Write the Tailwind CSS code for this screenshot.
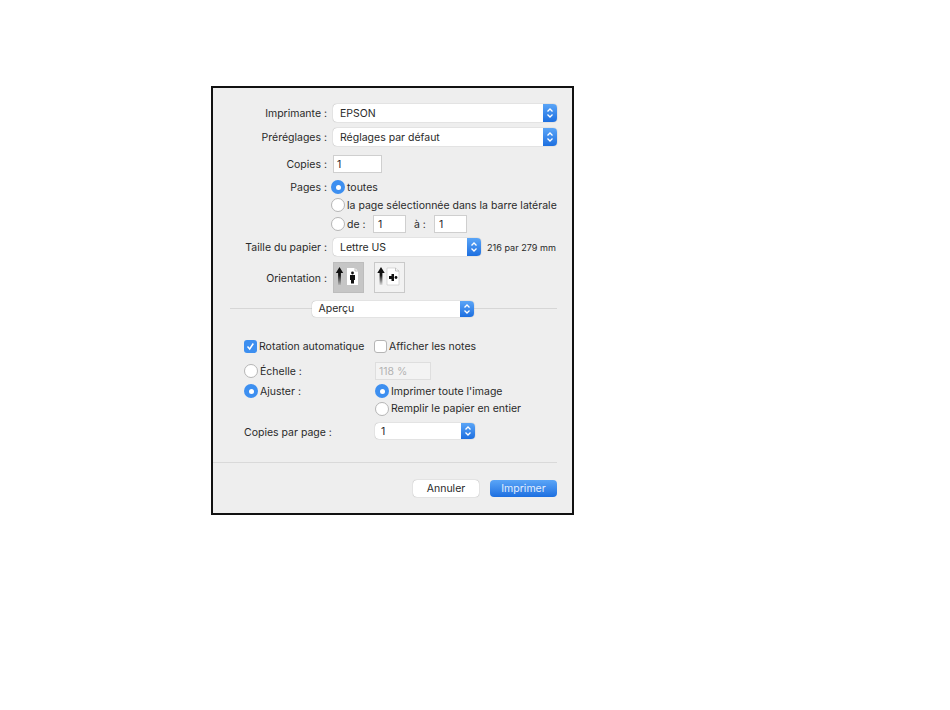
<!DOCTYPE html>
<html lang="fr">
<head>
  <meta charset="UTF-8" />
  <title>Imprimer</title>
  <script src="https://cdn.jsdelivr.net/npm/@tailwindcss/browser@4"></script>
</head>
<body class="bg-white font-['Inter','Liberation_Sans',sans-serif] text-[10.5px] leading-[17px] text-[#2a2a2a]">
  <div class="pt-[86px] pl-[211px]">
    <!-- dialog -->
    <div class="relative w-[363px] h-[429px] border-2 border-[#111] bg-[#eeeeee] pt-[16px] pr-[15px] flex flex-col">

      <div class="flex items-center h-[18px]">
        <span class="w-[114px] text-right">Imprimante :</span>
        <div class="ml-[6px] flex-1 h-[18px] bg-white rounded-[4px] shadow-[0_0_1px_#888] flex items-center justify-between pl-[7px]">
          <span>EPSON</span>
          <span class="w-[14px] h-[18px] rounded-r-[4px] bg-gradient-to-b from-[#5aa5f7] to-[#1c6fe0] flex items-center justify-center">
            <svg width="8" height="12" viewBox="0 0 8 12" fill="none" stroke="#fff" stroke-width="1.3"><path d="M1.5 4.5 4 2l2.5 2.5M1.5 7.5 4 10l2.5-2.5"/></svg>
          </span>
        </div>
      </div>

      <div class="flex items-center h-[18px] mt-[6px]">
        <span class="w-[114px] text-right">Préréglages :</span>
        <div class="ml-[6px] flex-1 h-[18px] bg-white rounded-[4px] shadow-[0_0_1px_#888] flex items-center justify-between pl-[7px]">
          <span>Réglages par défaut</span>
          <span class="w-[14px] h-[18px] rounded-r-[4px] bg-gradient-to-b from-[#5aa5f7] to-[#1c6fe0] flex items-center justify-center">
            <svg width="8" height="12" viewBox="0 0 8 12" fill="none" stroke="#fff" stroke-width="1.3"><path d="M1.5 4.5 4 2l2.5 2.5M1.5 7.5 4 10l2.5-2.5"/></svg>
          </span>
        </div>
      </div>

      <div class="flex items-center h-[18px] mt-[9px]">
        <span class="w-[114px] text-right">Copies :</span>
        <div class="ml-[6px] w-[49px] h-[18px] bg-white border border-[#cfcfcf] pl-[3px] flex items-center">1</div>
      </div>

      <div class="flex items-center h-[18px] mt-[5px]">
        <span class="w-[114px] text-right">Pages :</span>
        <span class="ml-[4px] shrink-0 w-[14px] h-[14px] rounded-full bg-[#3d8ff0] flex items-center justify-center"><span class="w-[5px] h-[5px] rounded-full bg-white"></span></span>
        <span class="ml-[2px]">toutes</span>
      </div>

      <div class="flex items-center h-[18px]">
        <span class="ml-[118px] shrink-0 w-[14px] h-[14px] rounded-full bg-white border border-[#b5b5b5]"></span>
        <span class="ml-[2px] whitespace-nowrap">la page sélectionnée dans la barre latérale</span>
      </div>

      <div class="flex items-center h-[18px] mt-[1px]">
        <span class="ml-[118px] shrink-0 w-[14px] h-[14px] rounded-full bg-white border border-[#b5b5b5]"></span>
        <span class="ml-[2px] w-[26px]">de :</span>
        <div class="w-[33px] h-[18px] bg-white border border-[#cfcfcf] pl-[4px] flex items-center">1</div>
        <span class="ml-[8px] w-[20px]">à :</span>
        <div class="w-[33px] h-[18px] bg-white border border-[#cfcfcf] pl-[4px] flex items-center">1</div>
      </div>

      <div class="flex items-center h-[18px] mt-[5px]">
        <span class="w-[114px] text-right">Taille du papier :</span>
        <div class="ml-[6px] w-[148px] h-[18px] bg-white rounded-[4px] shadow-[0_0_1px_#888] flex items-center justify-between pl-[7px]">
          <span>Lettre US</span>
          <span class="w-[14px] h-[18px] rounded-r-[4px] bg-gradient-to-b from-[#5aa5f7] to-[#1c6fe0] flex items-center justify-center">
            <svg width="8" height="12" viewBox="0 0 8 12" fill="none" stroke="#fff" stroke-width="1.3"><path d="M1.5 4.5 4 2l2.5 2.5M1.5 7.5 4 10l2.5-2.5"/></svg>
          </span>
        </div>
        <span class="ml-[6px] text-[9.1px] whitespace-nowrap">216 par 279 mm</span>
      </div>

      <div class="flex items-center h-[31px] mt-[6px]">
        <span class="w-[114px] text-right pt-[2px]">Orientation :</span>
        <div class="ml-[6px] w-[31px] h-[31px] bg-[#c6c6c6] border border-[#bdbdbd]">
          <svg width="29" height="29" viewBox="0 0 29 29">
            <defs><linearGradient id="fadeA" x1="0" y1="0" x2="0" y2="1"><stop offset="0.45" stop-color="#111"/><stop offset="1" stop-color="#111" stop-opacity="0.1"/></linearGradient></defs>
            <path d="M1.800 10 5.500 4 9.200 10H6.900V22H4.100V10z" fill="url(#fadeA)"/>
            <path d="M13 5h8l3 3v14H13z" fill="#fff"/>
            <path d="M21 5v3h3" fill="none" stroke="#aaa" stroke-width=".7"/>
            <circle cx="18.500" cy="10" r="1.400" fill="#111"/>
            <path d="M16 12h5v5h-1v3.500h-3V17h-1z" fill="#111"/>
          </svg>
        </div>
        <div class="ml-[10px] w-[31px] h-[31px] bg-[#f2f2f2] border border-[#c9c9c9]">
          <svg width="29" height="29" viewBox="0 0 29 29">
            <defs><linearGradient id="fadeB" x1="0" y1="0" x2="0" y2="1"><stop offset="0.45" stop-color="#111"/><stop offset="1" stop-color="#111" stop-opacity="0.1"/></linearGradient></defs>
            <path d="M2.300 10 6 4 9.700 10H7.400V22H4.600V10z" fill="url(#fadeB)"/>
            <path d="M12 5h8.500l3.500 3v14H12z" fill="#fff" stroke="#c4c4c4" stroke-width=".6"/>
            <path d="M20.500 5v3h3.500" fill="none" stroke="#aaa" stroke-width=".7"/>
            <circle cx="21" cy="14.500" r="1.400" fill="#111"/>
            <path d="M14 13h2.500v-2h2.500v7h-2.500v-2H14z" fill="#111"/>
          </svg>
        </div>
      </div>

      <div class="relative flex justify-center h-[16px] mt-[8px]">
        <div class="absolute left-[17px] right-0 top-[7px] h-px bg-[#d6d6d6]"></div>
        <div class="relative ml-[15px] w-[162px] h-[16px] bg-white rounded-[4px] shadow-[0_0_1px_#888] flex items-center justify-between pl-[7px]">
          <span class="pb-[2px]">Aperçu</span>
          <span class="w-[14px] h-[16px] rounded-r-[4px] bg-gradient-to-b from-[#5aa5f7] to-[#1c6fe0] flex items-center justify-center">
            <svg width="8" height="12" viewBox="0 0 8 12" fill="none" stroke="#fff" stroke-width="1.3"><path d="M1.5 4.5 4 2l2.5 2.5M1.5 7.5 4 10l2.5-2.5"/></svg>
          </span>
        </div>
      </div>

      <div class="flex items-center h-[16px] mt-[21px] pl-[31px]">
        <span class="shrink-0 w-[13px] h-[13px] rounded-[3px] bg-[#3d8ff0] flex items-center justify-center">
          <svg width="9" height="9" viewBox="0 0 9 9" fill="none" stroke="#fff" stroke-width="1.5"><path d="M1.5 4.5 3.700 7l3.600-5.500"/></svg>
        </span>
        <span class="ml-[2px] w-[115px] whitespace-nowrap">Rotation automatique</span>
        <span class="shrink-0 w-[13px] h-[13px] rounded-[3px] bg-white border border-[#b5b5b5]"></span>
        <span class="ml-[2px] whitespace-nowrap">Afficher les notes</span>
      </div>

      <div class="flex items-center h-[18px] mt-[8px] pl-[31px]">
        <span class="shrink-0 w-[14px] h-[14px] rounded-full bg-white border border-[#b5b5b5]"></span>
        <span class="ml-[2px] w-[115px]">Échelle :</span>
        <div class="w-[56px] h-[18px] bg-[#f3f3f3] border border-[#dedede] pl-[3px] flex items-center text-[#b4b4b4]">118 %</div>
      </div>

      <div class="flex items-center h-[18px] mt-[2px] pl-[31px]">
        <span class="shrink-0 w-[14px] h-[14px] rounded-full bg-[#3d8ff0] flex items-center justify-center"><span class="w-[5px] h-[5px] rounded-full bg-white"></span></span>
        <span class="ml-[2px] w-[115px]">Ajuster :</span>
        <span class="shrink-0 w-[14px] h-[14px] rounded-full bg-[#3d8ff0] flex items-center justify-center"><span class="w-[5px] h-[5px] rounded-full bg-white"></span></span>
        <span class="ml-[2px] whitespace-nowrap">Imprimer toute l'image</span>
      </div>

      <div class="flex items-center h-[17px] pl-[162px]">
        <span class="shrink-0 w-[14px] h-[14px] rounded-full bg-white border border-[#b5b5b5]"></span>
        <span class="ml-[2px] whitespace-nowrap">Remplir le papier en entier</span>
      </div>

      <div class="flex items-center h-[16px] mt-[6px] pl-[31px]">
        <span class="w-[131px] pt-[2px]">Copies par page :</span>
        <div class="w-[100px] h-[16px] bg-white rounded-[4px] shadow-[0_0_1px_#888] flex items-center justify-between pl-[6px]">
          <span>1</span>
          <span class="w-[14px] h-[16px] rounded-r-[4px] bg-gradient-to-b from-[#5aa5f7] to-[#1c6fe0] flex items-center justify-center">
            <svg width="8" height="12" viewBox="0 0 8 12" fill="none" stroke="#fff" stroke-width="1.3"><path d="M1.5 4.5 4 2l2.5 2.5M1.5 7.5 4 10l2.5-2.5"/></svg>
          </span>
        </div>
      </div>

      <div class="h-px bg-[#d9d9d9] mt-[23px]"></div>

      <div class="flex justify-end gap-[11px] mt-[17px]">
        <button class="w-[66px] h-[17px] bg-white rounded-[4px] shadow-[0_0_1px_#888] flex items-center justify-center">Annuler</button>
        <button class="w-[67px] h-[17px] rounded-[4px] bg-gradient-to-b from-[#5aa5f7] to-[#1c6fe0] text-white/85 flex items-center justify-center">Imprimer</button>
      </div>
    </div>
  </div>
</body>
</html>
